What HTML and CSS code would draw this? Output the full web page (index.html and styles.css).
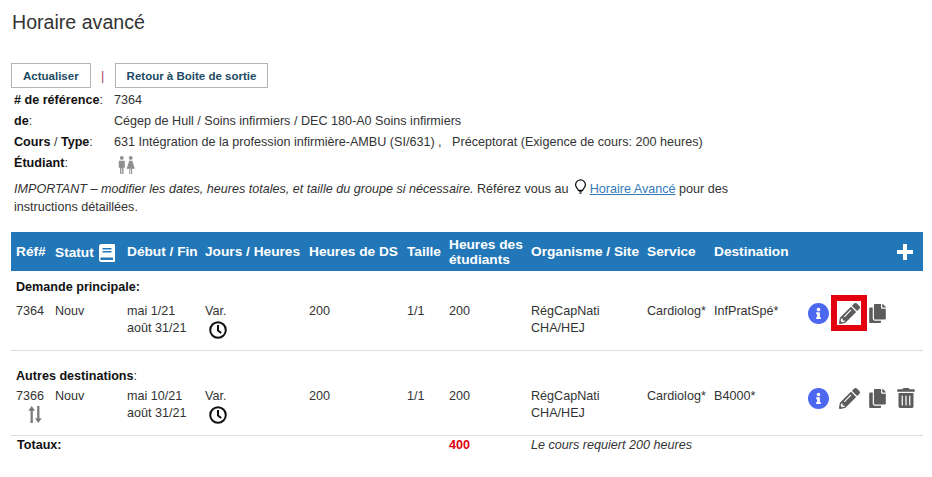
FILE: index.html
```html
<!DOCTYPE html>
<html lang="fr">
<head>
<meta charset="utf-8">
<title>Horaire avancé</title>
<link rel="stylesheet" href="styles.css">
</head>
<body>
<svg class="defs" width="0" height="0" aria-hidden="true">
  <defs>
    <symbol id="i-clock" viewBox="0 0 18 18">
      <circle cx="9" cy="9" r="7.800" fill="none" stroke="#111" stroke-width="2"/>
      <path d="M9 4V9.500L12.200 12" fill="none" stroke="#111" stroke-width="2"/>
    </symbol>
    <symbol id="i-info" viewBox="8 8 496 496">
      <path d="M256 8C119.043 8 8 119.083 8 256c0 136.997 111.043 248 248 248s248-111.003 248-248C504 119.083 392.957 8 256 8zm0 110c23.196 0 42 18.804 42 42s-18.804 42-42 42-42-18.804-42-42 18.804-42 42-42zm56 254c0 6.627-5.373 12-12 12h-88c-6.627 0-12-5.373-12-12v-24c0-6.627 5.373-12 12-12h12v-64h-12c-6.627 0-12-5.373-12-12v-24c0-6.627 5.373-12 12-12h64c6.627 0 12 5.373 12 12v100h12c6.627 0 12 5.373 12 12v24z" fill="#4c68f0"/>
    </symbol>
    <symbol id="i-pencil" viewBox="0 0 512 512">
      <path d="M497.900 142.100l-46.100 46.100c-4.700 4.700-12.300 4.700-17 0l-111-111c-4.700-4.700-4.700-12.300 0-17l46.100-46.100c18.700-18.700 49.100-18.700 67.900 0l60.100 60.100c18.800 18.700 18.800 49.100 0 67.900zM284.200 99.800L21.600 362.400.4 483.900c-2.900 16.400 11.400 30.600 27.800 27.800l121.500-21.300 262.600-262.600c4.700-4.700 4.700-12.300 0-17l-111-111c-4.800-4.700-12.400-4.700-17.100 0zM124.100 339.900c-5.500-5.500-5.500-14.300 0-19.800l154-154c5.500-5.500 14.300-5.500 19.800 0s5.500 14.300 0 19.800l-154 154c-5.500 5.500-14.300 5.500-19.800 0zM88 424h48v36.300l-64.500 11.300-31.100-31.100L51.700 376H88v48z" fill="#5c5c5c"/>
    </symbol>
    <symbol id="i-copy" viewBox="0 0 448 512">
      <path d="M320 448v40c0 13.255-10.745 24-24 24H24c-13.255 0-24-10.745-24-24V120c0-13.255 10.745-24 24-24h72v296c0 30.879 25.121 56 56 56h168zm0-344V0H152c-13.255 0-24 10.745-24 24v368c0 13.255 10.745 24 24 24h272c13.255 0 24-10.745 24-24V128H344c-13.200 0-24-10.800-24-24zm120.971-31.029L375.029 7.029A24 24 0 0 0 358.059 0H352v96h96v-6.059a24 24 0 0 0-7.029-16.970z" fill="#5c5c5c"/>
    </symbol>
    <symbol id="i-trash" viewBox="0 0 448 512">
      <path d="M32 464a48 48 0 0 0 48 48h288a48 48 0 0 0 48-48V128H32zm272-256a16 16 0 0 1 32 0v224a16 16 0 0 1-32 0zm-96 0a16 16 0 0 1 32 0v224a16 16 0 0 1-32 0zm-96 0a16 16 0 0 1 32 0v224a16 16 0 0 1-32 0zM432 32H312l-9.400-18.700A24 24 0 0 0 281.100 0H166.800a23.720 23.720 0 0 0-21.400 13.300L136 32H16A16 16 0 0 0 0 48v32a16 16 0 0 0 16 16h416a16 16 0 0 0 16-16V48a16 16 0 0 0-16-16z" fill="#5c5c5c"/>
    </symbol>
  </defs>
</svg>

<h1 class="title">Horaire avancé</h1>

<div class="actions-bar">
  <button class="btn" type="button">Actualiser</button>
  <span class="bar-sep">|</span>
  <button class="btn" type="button">Retour à Boite de sortie</button>
</div>

<dl class="info">
  <dt><b># de référence</b>:</dt><dd>7364</dd>
  <dt><b>de</b>:</dt><dd>Cégep de Hull / Soins infirmiers / DEC 180-A0 Soins infirmiers</dd>
  <dt><b>Cours</b> / <b>Type</b>:</dt><dd>631 Intégration de la profession infirmière-AMBU (SI/631) ,&nbsp;&nbsp; Préceptorat (Exigence de cours: 200 heures)</dd>
  <dt><b>Étudiant</b>:</dt>
  <dd>
    <svg class="people" viewBox="0 0 18 19" width="17" height="18" aria-hidden="true">
      <g fill="#8f8f8f">
        <circle cx="4" cy="2" r="2"/><circle cx="13.500" cy="2" r="2"/>
        <path d="M.8 5H7.200V12.500H5.800V19H4.400V13H3.600V19H2.200V12.500H.8Z"/>
        <path d="M11.800 5H15.200L17.800 13.500H15V19H13.900V13.500H13.100V19H12V13.500H9.200Z"/>
      </g>
    </svg>
  </dd>
</dl>

<p class="note"><i>IMPORTANT – modifier les dates, heures totales, et taille du groupe si nécessaire.</i> Référez vous au
  <svg class="bulb" viewBox="0 0 14 17" width="13" height="15" aria-hidden="true">
    <path d="M7 1a5.600 5.600 0 0 0-5.600 5.600c0 2.600 2.600 4 3.200 6.400h4.800c.6-2.400 3.200-3.800 3.200-6.400A5.600 5.600 0 0 0 7 1Z" fill="none" stroke="#111" stroke-width="1.400"/>
    <path d="M5 14.500H9M5.800 16.200H8.200" stroke="#111" stroke-width="1.300"/>
  </svg>
  <a href="#">Horaire Avancé</a> pour des<br>instructions détaillées.</p>

<table class="grid">
  <colgroup>
    <col class="c-ref"><col class="c-statut"><col class="c-dates"><col class="c-jours"><col class="c-ds"><col class="c-taille"><col class="c-etu"><col class="c-org"><col class="c-serv"><col class="c-dest"><col class="c-act">
  </colgroup>
  <thead>
    <tr>
      <th>Réf#</th>
      <th><span class="statut">Statut
        <svg class="book" viewBox="0 0 16 18" width="16" height="18" aria-hidden="true">
          <path d="M2.500 0H15a1 1 0 0 1 1 1V17a1 1 0 0 1-1 1H2.500A2.500 2.500 0 0 1 0 15.500V2.500A2.500 2.500 0 0 1 2.500 0ZM3.500 4V5.500H12.500V4ZM3.500 7V8.500H12.500V7ZM2.500 13.500A1.200 1.200 0 0 0 2.500 16H14V13.500Z" fill="#fff" fill-rule="evenodd"/>
        </svg></span></th>
      <th>Début / Fin</th>
      <th>Jours / Heures</th>
      <th>Heures de DS</th>
      <th>Taille</th>
      <th>Heures des étudiants</th>
      <th>Organisme / Site</th>
      <th>Service</th>
      <th>Destination</th>
      <th class="plus-cell"><svg class="plus" viewBox="0 0 16 16" width="16" height="16" aria-hidden="true"><path d="M6 0H10V6H16V10H10V16H6V10H0V6H6Z" fill="#fff"/></svg></th>
    </tr>
  </thead>
  <tbody class="group group-main">
    <tr class="group-head"><td colspan="11"><b>Demande principale:</b></td></tr>
    <tr class="data">
      <td>7364</td>
      <td>Nouv</td>
      <td>mai 1/21<br>août 31/21</td>
      <td>Var.<svg class="clock"><use href="#i-clock"/></svg></td>
      <td>200</td>
      <td>1/1</td>
      <td>200</td>
      <td>RégCapNati<br>CHA/HEJ</td>
      <td>Cardiolog*</td>
      <td>InfPratSpé*</td>
      <td>
        <div class="icons">
          <svg class="ic-info"><use href="#i-info"/></svg>
          <span class="pen-slot hilite"><svg class="ic-pencil"><use href="#i-pencil"/></svg></span>
          <svg class="ic-copy"><use href="#i-copy"/></svg>
        </div>
      </td>
    </tr>
  </tbody>
  <tbody class="group group-other">
    <tr class="group-head"><td colspan="11"><b>Autres destinations</b>:</td></tr>
    <tr class="data">
      <td>7366
        <svg class="swap" viewBox="0 0 14 18" width="14" height="17" aria-hidden="true">
          <path d="M3.500 0 7 5H4.700V18H2.300V5H0ZM10.500 18 7 13H9.300V0H11.700V13H14Z" fill="#7a7a7a"/>
        </svg>
      </td>
      <td>Nouv</td>
      <td>mai 10/21<br>août 31/21</td>
      <td>Var.<svg class="clock"><use href="#i-clock"/></svg></td>
      <td>200</td>
      <td>1/1</td>
      <td>200</td>
      <td>RégCapNati<br>CHA/HEJ</td>
      <td>Cardiolog*</td>
      <td>B4000*</td>
      <td>
        <div class="icons">
          <svg class="ic-info"><use href="#i-info"/></svg>
          <span class="pen-slot"><svg class="ic-pencil"><use href="#i-pencil"/></svg></span>
          <svg class="ic-copy"><use href="#i-copy"/></svg>
          <svg class="ic-trash"><use href="#i-trash"/></svg>
        </div>
      </td>
    </tr>
  </tbody>
  <tfoot>
    <tr>
      <td colspan="6" class="tot-label">Totaux:</td>
      <td class="tot-val">400</td>
      <td colspan="4" class="tot-note">Le cours requiert 200 heures</td>
    </tr>
  </tfoot>
</table>
</body>
</html>
```

FILE: styles.css
```css
* { box-sizing: border-box; }
html, body { margin: 0; padding: 0; background: #fff; }
body {
  padding: 0 9px 0 11px;
  font: 12.6px/20px "Liberation Sans", Arial, sans-serif;
  color: #333;
}
.defs { position: absolute; }
.title {
  margin: 0 0 0 1px;
  padding-top: 10px;
  height: 63px;
  font-size: 19.600px;
  line-height: 24px;
  font-weight: 400;
  color: #333;
}
.actions-bar { display: flex; align-items: center; height: 25px; }
.btn {
  height: 25px;
  padding: 0 11px;
  border: 1px solid #b4b4b4;
  background: #fff;
  font: bold 11.500px "Liberation Sans", Arial, sans-serif;
  color: #1c4a63;
}
.bar-sep { width: 24px; text-align: center; color: #a33a5c; }
.info {
  display: grid;
  grid-template-columns: 100px 1fr;
  margin: 2px 0 0;
  padding: 0 0 0 3px;
  grid-auto-rows: 21px;
}
.info dt, .info dd { margin: 0; }
.info b { color: #111; }
.people { margin: 3px 0 0 4px; display: block; }
.note { margin: 5px 0 0 3px; line-height: 18px; width: 760px; }
.bulb { vertical-align: -1px; margin: 0 -1px 0 2px; }
.note a { color: #337ab7; text-decoration: underline; }
.grid {
  width: 912px;
  margin-top: 16px;
  border-collapse: collapse;
  table-layout: fixed;
}
.c-ref { width: 39px; }
.c-statut { width: 72px; }
.c-dates { width: 78px; }
.c-jours { width: 104px; }
.c-ds { width: 98px; }
.c-taille { width: 42px; }
.c-etu { width: 82px; }
.c-org { width: 116px; }
.c-serv { width: 67px; }
.c-dest { width: 94px; }
.c-act { width: 120px; }
thead th {
  height: 39px;
  padding: 0 0 0 5px;
  background: #2277b8;
  color: #fff;
  font-size: 13.700px;
  line-height: 15px;
  font-weight: 700;
  text-align: left;
}
.statut { display: flex; align-items: center; gap: 5px; padding-top: 2px; }
.plus-cell { text-align: right; padding-right: 10px; }
.plus { display: inline-block; vertical-align: middle; }
.group-head td { padding: 0 0 0 5px; line-height: 17px; }
.group-main .group-head td { height: 32px; }
.group-other .group-head td { height: 38px; padding-top: 14px; }
.group-head b { color: #111; }
.data td { height: 47px; padding: 0 0 0 5px; vertical-align: top; line-height: 17px; }
.group { border-bottom: 1px solid #ddd; }
.clock { display: block; width: 18px; height: 18px; margin: 1px 0 0 4px; }
.swap { display: block; margin: 1px 0 0 12px; }
.icons { display: flex; align-items: center; height: 20px; }
.ic-info { width: 21px; height: 21px; }
.pen-slot {
  flex: none;
  display: flex; align-items: center; justify-content: center;
  width: 36px; margin-left: 2px;
}
.hilite { height: 36px; border: 6px solid #e5000f; }
.ic-pencil { flex: none; width: 21px; height: 21px; }
.ic-copy { width: 17px; height: 19px; margin-left: 2px; }
.ic-trash { width: 18px; height: 20px; margin-left: 11px; }
tfoot td { padding: 0 0 0 5px; height: 19px; line-height: 18px; }
.tot-label { font-weight: 700; color: #111; padding-left: 6px; }
.tot-val { font-weight: 700; color: #e0000f; }
.tot-note { font-style: italic; }
```
